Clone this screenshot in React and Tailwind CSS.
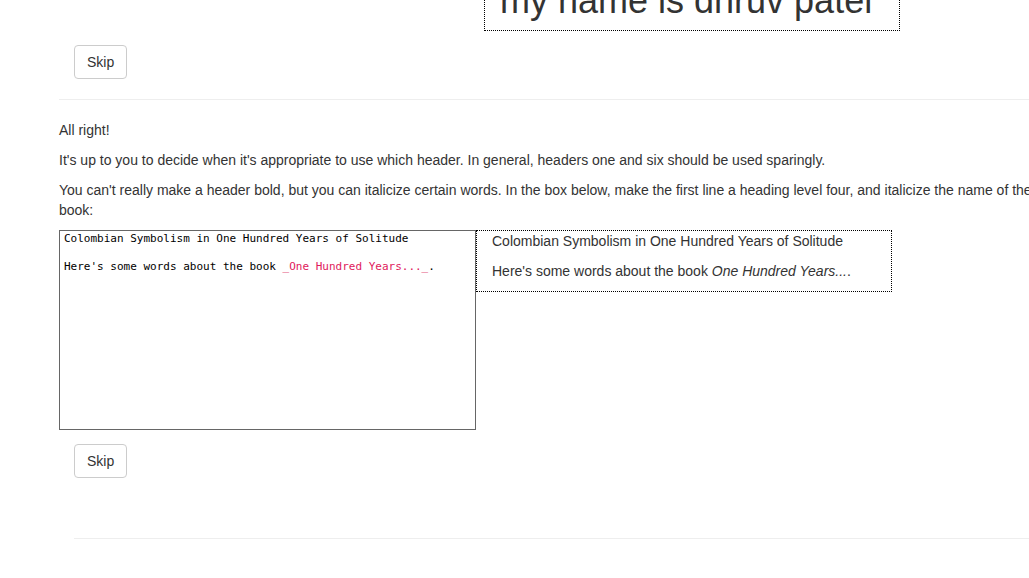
const sans = { fontFamily: '"Liberation Sans", Arial, sans-serif' };

function SkipButton() {
    return (
        <button className="ml-[15px] h-[34px] px-[12px] border border-[#ccc] rounded-[4px] bg-white text-[14px] text-[#333] leading-[20px]">
            Skip
        </button>
    );
}

export default function App() {
    return (
        <div className="w-[1029px] h-[578px] overflow-hidden bg-white text-[#333] text-[14px] leading-[20px]" style={sans}>
            <div className="pl-[59px] w-[1100px]">
                {/* previous exercise, scrolled mostly out of view */}
                <div className="flex mt-[-40px]">
                    <div className="ml-[425px] w-[416px] border border-dotted border-black px-[15px]">
                        <h1 className="mt-[20px] mb-[9px] text-[36px] leading-[1.1] font-normal">my name is dhruv patel</h1>
                    </div>
                </div>
                <div className="mt-[14px]">
                    <SkipButton />
                </div>
                <hr className="mt-[20px] mb-[20px] border-0 border-t border-[#eee]" />

                <div className="w-[990px]">
                    <p className="mb-[10px]">All right!</p>
                    <p className="mb-[10px]">It's up to you to decide when it's appropriate to use which header. In general, headers one and six should be used sparingly.</p>
                    <p className="mb-[10px]">You can't really make a header bold, but you can italicize certain words. In the box below, make the first line a heading level four, and italicize the name of the book:</p>
                </div>

                <div className="flex items-start">
                    <div
                        className="w-[417px] h-[200px] border border-[#666] pl-[4px] pt-[1px] text-[11px] leading-[14px] text-black whitespace-pre"
                        style={{ fontFamily: '"DejaVu Sans Mono", "Liberation Mono", monospace' }}
                    >
                        <div>Colombian Symbolism in One Hundred Years of Solitude</div>
                        <div>&nbsp;</div>
                        <div>
                            Here's some words about the book <span className="text-[#e0195c]">_One Hundred Years..._</span>.
                        </div>
                    </div>
                    <div className="w-[416px] border border-dotted border-black px-[15px]">
                        <p className="mb-[10px]">Colombian Symbolism in One Hundred Years of Solitude</p>
                        <p className="mb-[10px]">
                            Here's some words about the book <em>One Hundred Years...</em>.
                        </p>
                    </div>
                </div>
                <div className="mt-[14px]">
                    <SkipButton />
                </div>
                <hr className="ml-[15px] mt-[60px] border-0 border-t border-[#eee]" />
            </div>
        </div>
    );
}
